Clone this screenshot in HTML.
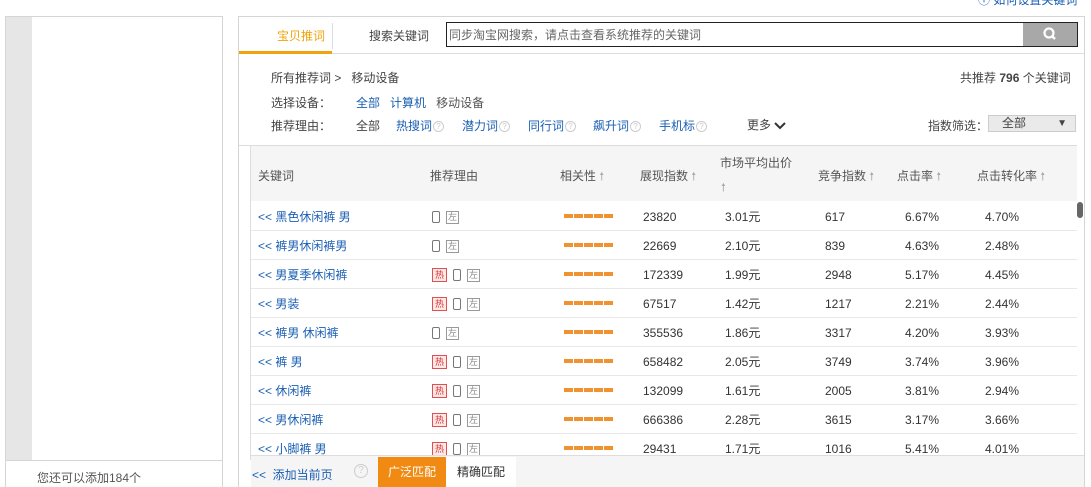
<!DOCTYPE html>
<html><head><meta charset="utf-8"><style>
*{margin:0;padding:0;box-sizing:border-box}
html,body{width:1091px;height:487px;overflow:hidden}
body{background:#fff;font-family:"Liberation Sans","Noto Sans CJK SC",sans-serif;font-size:12px;color:#333;position:relative}
.a{position:absolute;white-space:nowrap}
.blue{color:#1a5fb4}
.q{display:inline-block;width:11px;height:11px;border:1px solid #ccc;border-radius:50%;color:#ccc;font-size:8px;line-height:9px;text-align:center;vertical-align:middle;margin-left:1px}
.row{position:absolute;left:251px;width:826px;height:29px;border-bottom:1px solid #e8e8e8}
.row span{position:absolute;top:7px;line-height:16px}
.ic{display:flex;align-items:center;gap:6px;height:16px}
.ph{display:inline-block;width:8px;height:12px;border:1.5px solid #777;border-radius:2px}
.lf{display:inline-block;width:13px;height:13px;border:1px solid #999;font-size:9px;line-height:11px;text-align:center;color:#888;font-style:normal}
.ht{display:inline-block;width:15px;height:14px;border:1px solid #e05050;background:#fde8e8;font-size:9px;line-height:12px;text-align:center;color:#d33;font-style:normal}
.bar{position:absolute;top:12px;left:313px;width:50px;height:4px;background:repeating-linear-gradient(90deg,#f0922f 0 9px,#fff 9px 10px)}
.up{color:#aaa;font-size:11px}
</style></head><body>
<div class="a" style="left:978px;top:-9px;color:#1a5fb4">ⓘ 如何设置关键词</div>
<div class="a" style="left:5px;top:16px;width:218px;height:480px;border:1px solid #d5d5d5"></div>
<div class="a" style="left:6px;top:17px;width:26px;height:443px;background:#e6e6e6"></div>
<div class="a" style="left:5px;top:460px;width:218px;border-top:1px solid #d5d5d5"></div>
<div class="a" style="left:37px;top:469px;color:#555">您还可以添加184个</div>
<div class="a" style="left:238px;top:16px;width:847px;height:480px;border:1px solid #d5d5d5"></div>
<div class="a" style="left:239px;top:53px;width:845px;border-top:1px solid #ddd"></div>
<div class="a" style="left:239px;top:51px;width:93px;height:3px;background:#f0a30a"></div>
<div class="a" style="left:277px;top:27px;color:#f0a30a">宝贝推词</div>
<div class="a" style="left:332px;top:23px;height:26px;border-left:1px solid #ddd"></div>
<div class="a" style="left:369px;top:27px;color:#444">搜索关键词</div>
<div class="a" style="left:446px;top:22px;width:632px;height:25px;border:1px solid #222;padding:3px 2px;color:#666">同步淘宝网搜索，请点击查看系统推荐的关键词</div>
<div class="a" style="left:1023px;top:23px;width:54px;height:23px;background:#a8a8a8"><svg width="54" height="23"><circle cx="26" cy="10" r="4.5" fill="none" stroke="#fff" stroke-width="2.2"/><line x1="29" y1="13" x2="32" y2="16" stroke="#fff" stroke-width="2.5"/></svg></div>
<div class="a" style="left:271px;top:69px;color:#444">所有推荐词 &gt;&nbsp;&nbsp; 移动设备</div>
<div class="a" style="left:960px;top:69px;color:#444">共推荐 <b>796</b> 个关键词</div>
<div class="a" style="left:271px;top:94px;color:#444">选择设备：</div>
<div class="a" style="left:356px;top:94px"><span class="blue">全部</span>&nbsp;&nbsp; <span class="blue">计算机</span>&nbsp;&nbsp; <span style="color:#555">移动设备</span></div>
<div class="a" style="left:271px;top:117px;color:#444">推荐理由：</div>
<div class="a" style="left:356px;top:117px;color:#444">全部</div>
<div class="a blue" style="left:396px;top:117px">热搜词<span class="q">?</span></div>
<div class="a blue" style="left:462px;top:117px">潜力词<span class="q">?</span></div>
<div class="a blue" style="left:528px;top:117px">同行词<span class="q">?</span></div>
<div class="a blue" style="left:593px;top:117px">飙升词<span class="q">?</span></div>
<div class="a blue" style="left:659px;top:117px">手机标<span class="q">?</span></div>
<div class="a" style="left:747px;top:116px;color:#444">更多 <svg width="12" height="9" style="vertical-align:middle"><path d="M1 2 L6 7 L11 2" fill="none" stroke="#333" stroke-width="2"/></svg></div>
<div class="a" style="left:928px;top:117px;color:#444">指数筛选：</div>
<div class="a" style="left:988px;top:115px;width:88px;height:17px;border:1px solid #ccc;background:#eaeaea;padding-left:13px;line-height:15px;color:#444">全部<span style="position:absolute;right:8px;font-size:10px">&#9660;</span></div>
<div class="a" style="left:251px;top:145px;width:826px;height:56px;background:#f5f5f5;border-top:1px solid #ddd"></div>
<div class="a" style="left:239px;top:145px;width:12px;border-top:1px solid #ddd"></div>
<div class="a" style="left:250px;top:145px;height:315px;border-left:1px solid #ddd"></div>
<div class="a" style="left:258px;top:167px;color:#555">关键词</div>
<div class="a" style="left:430px;top:167px;color:#555">推荐理由</div>
<div class="a" style="left:560px;top:167px;color:#555">相关性 <span class="up">&#129045;</span></div>
<div class="a" style="left:640px;top:167px;color:#555">展现指数 <span class="up">&#129045;</span></div>
<div class="a" style="left:720px;top:154px;color:#555">市场平均出价</div>
<div class="a up" style="left:721px;top:179px">&#129045;</div>
<div class="a" style="left:818px;top:167px;color:#555">竞争指数 <span class="up">&#129045;</span></div>
<div class="a" style="left:897px;top:167px;color:#555">点击率 <span class="up">&#129045;</span></div>
<div class="a" style="left:977px;top:167px;color:#555">点击转化率 <span class="up">&#129045;</span></div>
<div class="a" style="left:1077px;top:202px;width:6px;height:16px;background:#666;border-radius:3px"></div>
<div class="row" style="top:202px"><span class="blue" style="left:7px">&lt;&lt; 黑色休闲裤 男</span><span class="ic" style="left:181px"><i class="ph"></i><i class="lf">左</i></span><i class="bar"></i><span style="left:392px">23820</span><span style="left:474px">3.01元</span><span style="left:574px">617</span><span style="left:654px">6.67%</span><span style="left:734px">4.70%</span></div>
<div class="row" style="top:231px"><span class="blue" style="left:7px">&lt;&lt; 裤男休闲裤男</span><span class="ic" style="left:181px"><i class="ph"></i><i class="lf">左</i></span><i class="bar"></i><span style="left:392px">22669</span><span style="left:474px">2.10元</span><span style="left:574px">839</span><span style="left:654px">4.63%</span><span style="left:734px">2.48%</span></div>
<div class="row" style="top:260px"><span class="blue" style="left:7px">&lt;&lt; 男夏季休闲裤</span><span class="ic" style="left:181px"><i class="ht">热</i><i class="ph"></i><i class="lf">左</i></span><i class="bar"></i><span style="left:392px">172339</span><span style="left:474px">1.99元</span><span style="left:574px">2948</span><span style="left:654px">5.17%</span><span style="left:734px">4.45%</span></div>
<div class="row" style="top:289px"><span class="blue" style="left:7px">&lt;&lt; 男装</span><span class="ic" style="left:181px"><i class="ht">热</i><i class="ph"></i><i class="lf">左</i></span><i class="bar"></i><span style="left:392px">67517</span><span style="left:474px">1.42元</span><span style="left:574px">1217</span><span style="left:654px">2.21%</span><span style="left:734px">2.44%</span></div>
<div class="row" style="top:318px"><span class="blue" style="left:7px">&lt;&lt; 裤男 休闲裤</span><span class="ic" style="left:181px"><i class="ph"></i><i class="lf">左</i></span><i class="bar"></i><span style="left:392px">355536</span><span style="left:474px">1.86元</span><span style="left:574px">3317</span><span style="left:654px">4.20%</span><span style="left:734px">3.93%</span></div>
<div class="row" style="top:347px"><span class="blue" style="left:7px">&lt;&lt; 裤 男</span><span class="ic" style="left:181px"><i class="ht">热</i><i class="ph"></i><i class="lf">左</i></span><i class="bar"></i><span style="left:392px">658482</span><span style="left:474px">2.05元</span><span style="left:574px">3749</span><span style="left:654px">3.74%</span><span style="left:734px">3.96%</span></div>
<div class="row" style="top:376px"><span class="blue" style="left:7px">&lt;&lt; 休闲裤</span><span class="ic" style="left:181px"><i class="ht">热</i><i class="ph"></i><i class="lf">左</i></span><i class="bar"></i><span style="left:392px">132099</span><span style="left:474px">1.61元</span><span style="left:574px">2005</span><span style="left:654px">3.81%</span><span style="left:734px">2.94%</span></div>
<div class="row" style="top:405px"><span class="blue" style="left:7px">&lt;&lt; 男休闲裤</span><span class="ic" style="left:181px"><i class="ht">热</i><i class="ph"></i><i class="lf">左</i></span><i class="bar"></i><span style="left:392px">666386</span><span style="left:474px">2.28元</span><span style="left:574px">3615</span><span style="left:654px">3.17%</span><span style="left:734px">3.66%</span></div>
<div class="row" style="top:434px;border:none"><span class="blue" style="left:7px">&lt;&lt; 小脚裤 男</span><span class="ic" style="left:181px"><i class="ht">热</i><i class="ph"></i><i class="lf">左</i></span><i class="bar"></i><span style="left:392px">29431</span><span style="left:474px">1.71元</span><span style="left:574px">1016</span><span style="left:654px">5.41%</span><span style="left:734px">4.01%</span></div>
<div class="a" style="left:251px;top:455px;width:833px;height:32px;background:#f5f5f5;border-top:1px solid #ddd"></div>
<div class="a blue" style="left:252px;top:466px">&lt;&lt;&nbsp; 添加当前页</div>
<div class="a" style="left:353px;top:463px"><span class="q" style="width:14px;height:14px;line-height:12px;font-size:10px">?</span></div>
<div class="a" style="left:378px;top:457px;width:68px;height:30px;background:#f08a12;color:#fff;text-align:center;line-height:30px">广泛匹配</div>
<div class="a" style="left:446px;top:457px;width:70px;height:30px;background:#fff;color:#333;text-align:center;line-height:30px">精确匹配</div>
</body></html>
